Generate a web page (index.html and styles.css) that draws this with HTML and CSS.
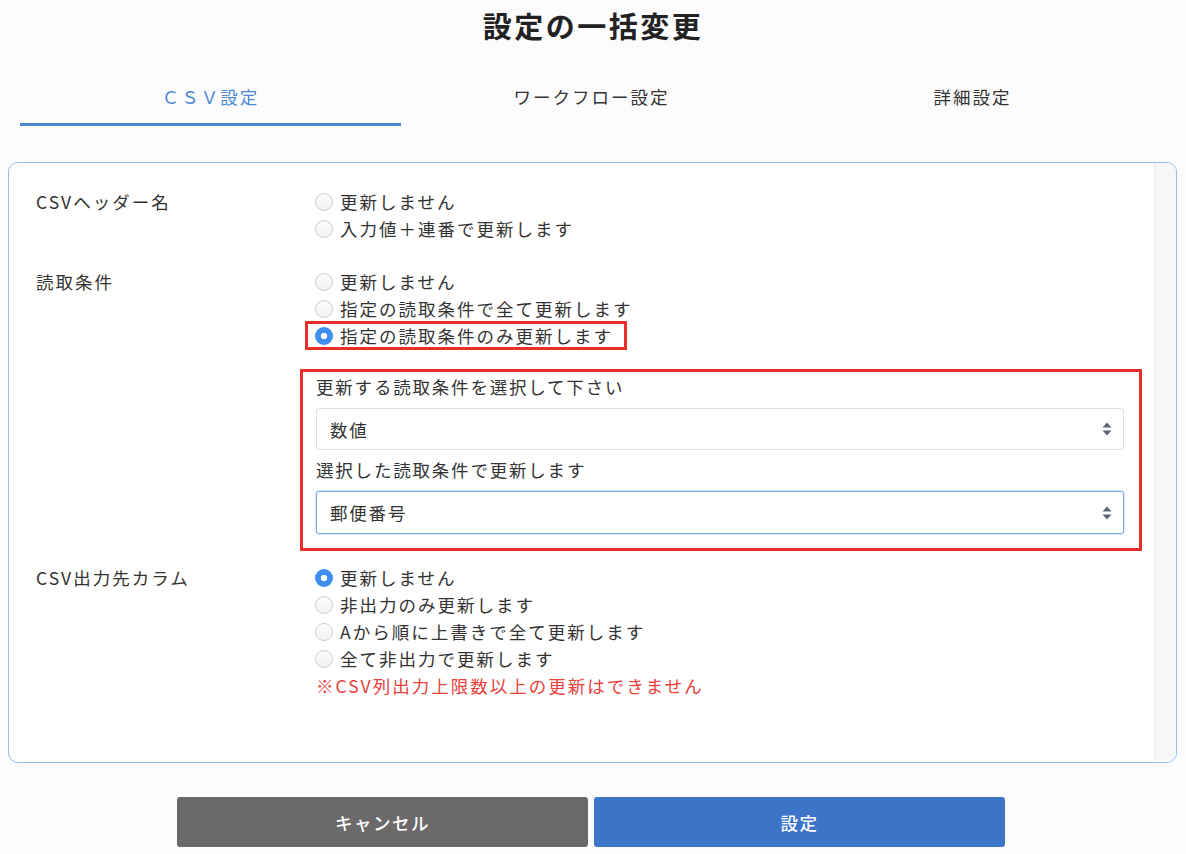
FILE: index.html
```html
<!DOCTYPE html>
<html lang="ja">
<head>
<meta charset="utf-8">
<title>設定の一括変更</title>
<link rel="stylesheet" href="styles.css">
</head>
<body>
<div class="page">
  <h1 class="title">設定の一括変更</h1>
  <div class="tabs">
    <div class="tab tab-active">ＣＳＶ設定</div>
    <div class="tab">ワークフロー設定</div>
    <div class="tab">詳細設定</div>
  </div>

  <div class="panel">
    <div class="panel-body">
      <div class="row">
        <div class="row-label">CSVヘッダー名</div>
        <div class="row-options">
          <label class="opt"><span class="radio"></span>更新しません</label>
          <label class="opt"><span class="radio"></span>入力値＋連番で更新します</label>
        </div>
      </div>

      <div class="row row-sub">
        <div class="row-label">読取条件</div>
        <div class="row-options">
          <label class="opt"><span class="radio"></span>更新しません</label>
          <label class="opt"><span class="radio"></span>指定の読取条件で全て更新します</label>
          <label class="opt opt-marked"><span class="radio radio-on"></span>指定の読取条件のみ更新します</label>

          <div class="sub">
            <div class="sub-label">更新する読取条件を選択して下さい</div>
            <div class="select">
              <span>数値</span>
              <svg class="arrows" width="10" height="14" viewBox="0 0 10 14"><path d="M5 0.5 L9.5 5.5 H0.5 Z" fill="#5d6577"/><path d="M5 13.5 L9.5 8.5 H0.5 Z" fill="#5d6577"/></svg>
            </div>
            <div class="sub-label">選択した読取条件で更新します</div>
            <div class="select select-focus">
              <span>郵便番号</span>
              <svg class="arrows" width="10" height="14" viewBox="0 0 10 14"><path d="M5 0.5 L9.5 5.5 H0.5 Z" fill="#5d6577"/><path d="M5 13.5 L9.5 8.5 H0.5 Z" fill="#5d6577"/></svg>
            </div>
          </div>
        </div>
      </div>

      <div class="row row-last">
        <div class="row-label">CSV出力先カラム</div>
        <div class="row-options">
          <label class="opt"><span class="radio radio-on"></span>更新しません</label>
          <label class="opt"><span class="radio"></span>非出力のみ更新します</label>
          <label class="opt"><span class="radio"></span>Aから順に上書きで全て更新します</label>
          <label class="opt"><span class="radio"></span>全て非出力で更新します</label>
          <div class="note">※CSV列出力上限数以上の更新はできません</div>
        </div>
      </div>
    </div>
    <div class="scroll-track"></div>
  </div>

  <div class="actions">
    <button class="btn btn-cancel">キャンセル</button>
    <button class="btn btn-primary">設定</button>
  </div>
</div>
</body>
</html>
```

FILE: styles.css
```css
* { box-sizing: border-box; }

html, body {
  margin: 0;
  padding: 0;
}

body {
  background: #fcfcfc;
  font-family: "Noto Sans CJK JP", "Noto Sans", sans-serif;
  color: #333;
  font-size: 17.5px;
  letter-spacing: 2px;
  width: 1186px;
  height: 854px;
  overflow: hidden;
}

.page {
  padding: 5px 0 0 0;
}

.title {
  margin: 0;
  text-align: center;
  font-size: 29px;
  line-height: 40px;
  font-weight: 700;
  color: #222;
  letter-spacing: 2.5px;
}

.tabs {
  display: flex;
  margin-left: 20px;
  width: 1143px;
}

.tab {
  flex: 1;
  text-align: center;
  padding: 38px 0 13px;
  line-height: 27px;
  color: #333;
  border-bottom: 3px solid transparent;
}

.tab-active {
  color: #4a88d8;
  border-bottom-color: #4a86d4;
}

.panel {
  margin: 36px 9px 0 8px;
  display: flex;
  background: #fff;
  border: 1px solid #92bdee;
  border-radius: 10px;
  overflow: hidden;
}

.panel-body {
  flex: 1;
  padding: 25px 0 63px 27px;
}

.scroll-track {
  width: 22px;
  background: #f7f7f7;
  border-left: 1px solid #e9e9e9;
}

.row {
  display: flex;
  margin-bottom: 26px;
}

.row-sub {
  margin-bottom: 13px;
}

.row-last {
  margin-bottom: 0;
}

.row-label {
  width: 280px;
  flex: none;
  line-height: 27px;
  color: #333;
}

.row-options {
  flex: 1;
  display: flex;
  flex-direction: column;
  align-items: flex-start;
}

.opt {
  display: flex;
  align-items: center;
  line-height: 27px;
  height: 27px;
  margin-left: -1px;
  color: #333;
}

.opt-marked {
  margin-left: -10px;
  padding-left: 9px;
  padding-right: 13px;
  outline: 3px solid #e8302a;
  outline-offset: -2px;
}

.radio {
  width: 18px;
  height: 18px;
  border-radius: 50%;
  border: 1px solid #cdcdcd;
  background: linear-gradient(#fdfdfd, #f1f1f1);
  margin-right: 7px;
  flex: none;
}

.radio-on {
  border: none;
  background: radial-gradient(circle, #fff 0 3px, #3f8ef0 3.5px);
}

.sub {
  margin: 20px 0 0 -16px;
  width: 842px;
  border: 3px solid #e8302a;
  padding: 1px 15px 14px 13px;
  letter-spacing: 1.8px;
}

.sub-label {
  line-height: 27px;
  margin-bottom: 8px;
  color: #333;
}

.select {
  height: 42px;
  border: 1px solid #dfe2e7;
  border-radius: 3px;
  background: #fff;
  display: flex;
  align-items: center;
  justify-content: space-between;
  padding: 0 11px 0 13px;
  margin-bottom: 6px;
  color: #333;
}

.select-focus {
  height: 43px;
  margin-bottom: 0;
  border-color: #7ca8e2;
  box-shadow: 0 0 0 1px #dbe7f8;
}

.arrows {
  display: block;
}

.note {
  color: #e8403a;
  line-height: 27px;
  margin-left: 0;
}

.actions {
  display: flex;
  justify-content: center;
  gap: 6px;
  margin-top: 34px;
  padding-right: 4px;
}

.btn {
  width: 411px;
  height: 50px;
  border: none;
  border-radius: 3px;
  color: #fff;
  font-family: "Noto Sans CJK JP", "Noto Sans", sans-serif;
  font-size: 17.5px;
  font-weight: 500;
  letter-spacing: 1.5px;
}

.btn-cancel {
  background: #6b696a;
}

.btn-primary {
  background: #3c75c8;
}
```
